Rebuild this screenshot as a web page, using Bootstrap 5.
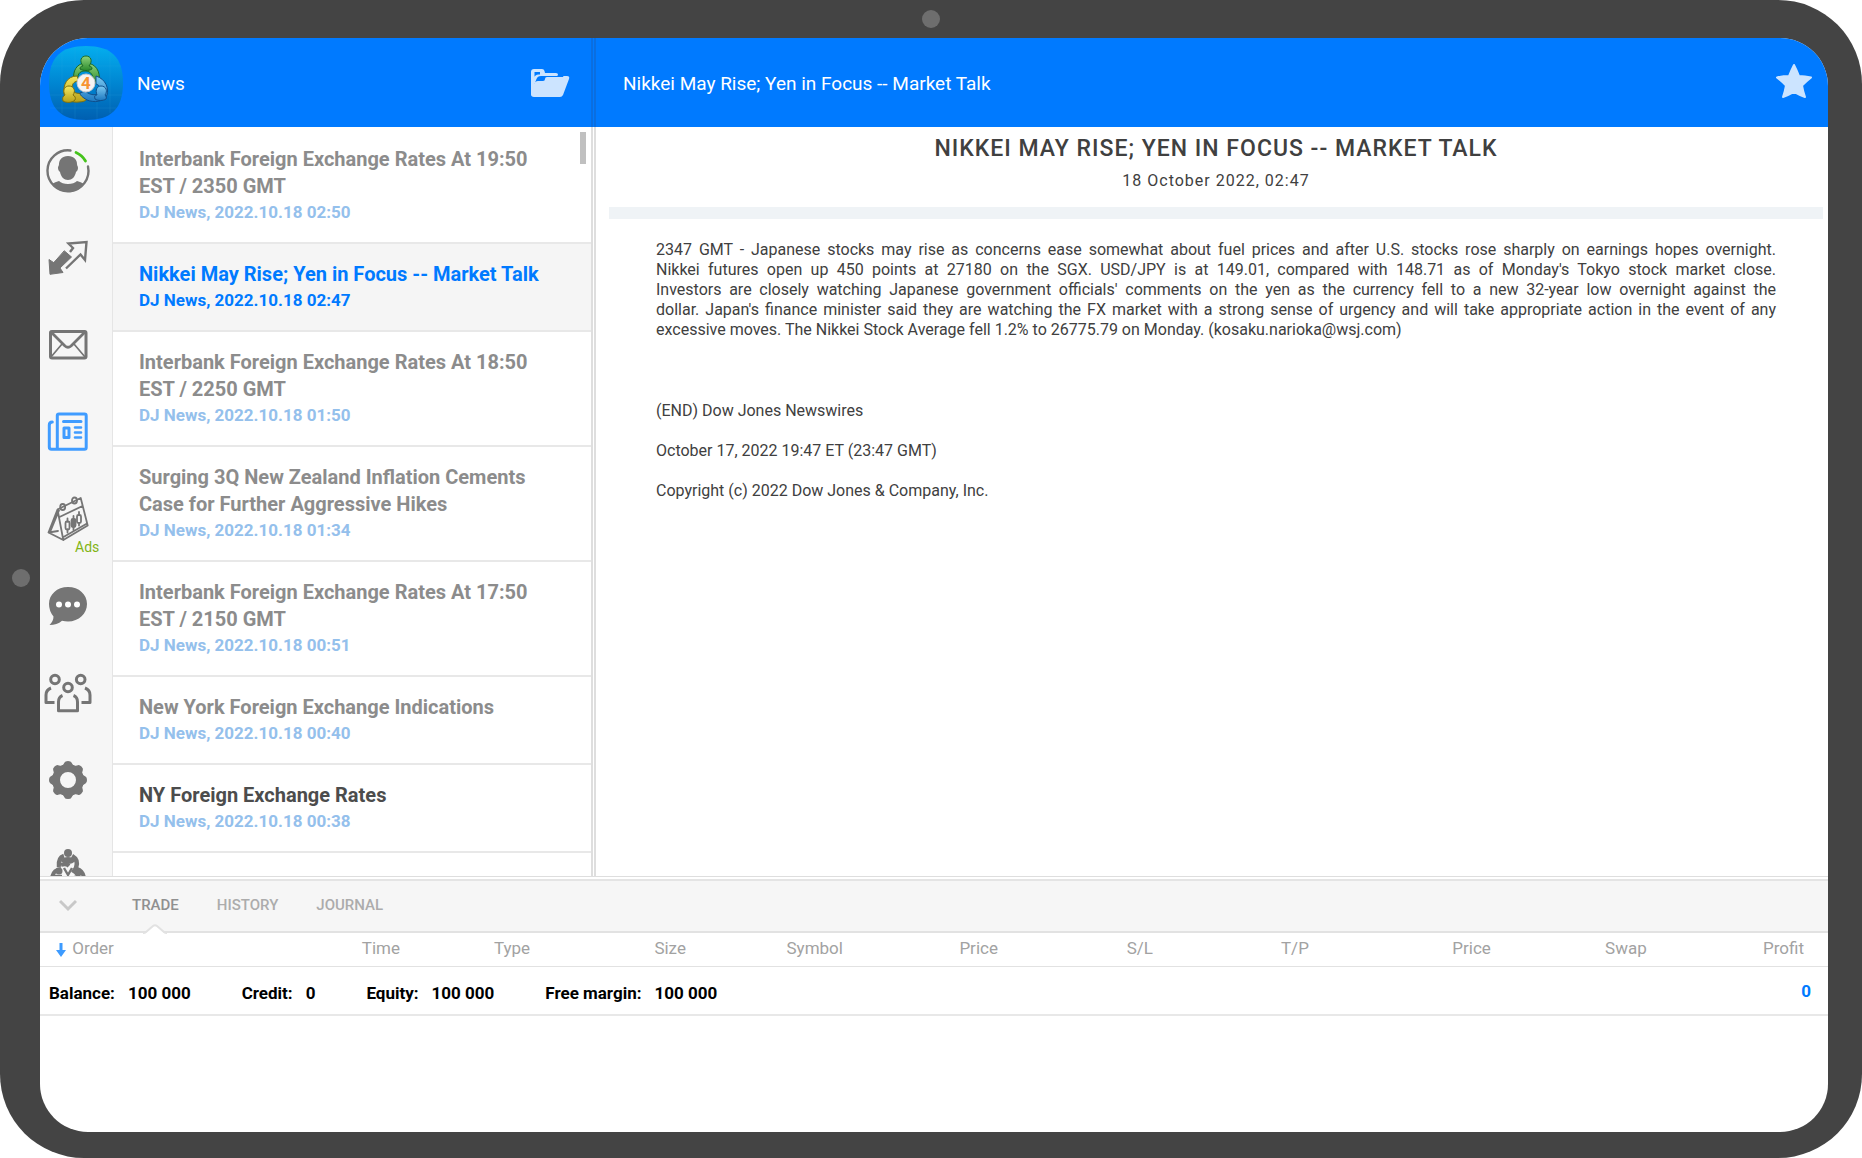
<!DOCTYPE html>
<html lang="en">
<head>
<meta charset="utf-8">
<meta name="viewport" content="width=device-width, initial-scale=1">
<title>News</title>
<link href="https://cdn.jsdelivr.net/npm/bootstrap@5.3.0/dist/css/bootstrap.min.css" rel="stylesheet">
<style>
  :root { --ink: #757575; --line: #e5e5e5; --blue: #007aff; --panel: #f6f6f6; }
  body { font-family: Roboto, "Liberation Sans", sans-serif; background: #fff; color: #404040; }
  .tablet { height: 100vh; padding: 38px 34px 26px 40px; background: #444; border-radius: 84px; }
  .lens { width: 18px; height: 18px; border-radius: 50%; background: #6e6e6e; }
  .lens-top { left: 50%; top: 10px; margin-left: -9px; }
  .lens-side { left: 12px; top: 50%; margin-top: -10px; }
  .app-screen { background: #fff; border-radius: 48px; }
  .topbar { background: var(--blue); color: #fff; height: 89px; font-size: 19px; line-height: 28px; }
  .topbar h1 { font-size: inherit; font-weight: 400; line-height: inherit; margin: 0; padding-top: 2px; }
  .topbar-left { width: 556px; padding: 0 21px 0 8px; border-right: 5px double #0a6ee0; }
  .topbar-right { padding: 0 15px 0 27px; }
  .brand { width: 76px; height: 76px; margin-right: 13px; }
  .plain-btn { border: 0; background: none; padding: 0; color: #cce4ff; line-height: 0; }
  .side-rail { width: 73px; background: var(--panel); border-right: 1px solid var(--line); }
  .rail-btn { display: block; position: relative; height: 87px; padding: 0 0 0 4px; border: 0; background: none; color: var(--ink); text-align: left; flex: none; }
  .rail-btn svg { width: 48px; height: 48px; fill: none; stroke: currentColor; stroke-width: 2.4; stroke-linejoin: round; stroke-linecap: round; }
  .rail-btn .solid { fill: currentColor; }
  .rail-btn.current { color: #409cff; }
  .ads-tag { position: absolute; left: 35px; bottom: 7px; font-size: 14px; line-height: 16px; color: #82b414; }
  .news-col { width: 483px; padding-top: 2px; border-right: 5px double #dedede; }
  .news-item { display: block; padding: 17px 34px 18px 26px; border-bottom: 2px solid #e8e8e8; text-decoration: none; color: #8c8c8c; }
  .news-item h2 { font-size: 20px; line-height: 27px; font-weight: 700; margin: 0; }
  .news-item p { font-size: 17px; line-height: 24px; font-weight: 700; margin: 0; color: #94c0ec; }
  .news-item.chosen { background: #f5f5f5; color: var(--blue); }
  .news-item.chosen p { color: var(--blue); }
  .news-item.unread { color: #4c4c4c; }
  .thumb { top: 5px; right: 5px; width: 6px; height: 32px; background: #c0c0c0; }
  .story { padding: 7px 5px 0 13px; }
  .story h2 { font-size: 23px; line-height: 30px; font-weight: 500; letter-spacing: 1px; margin: 0; text-transform: uppercase; }
  .story time { font-size: 16px; line-height: 20px; letter-spacing: 1px; margin: 7px 0 16px; }
  .story hr { height: 12px; border: 0; background: #eff3f6; opacity: 1; margin: 0 0 21px; }
  .story-text { padding: 0 47px; font-size: 16px; line-height: 20px; }
  .story-text p { margin: 0 0 20px; }
  .story-text .opening { margin-bottom: 61px; }
  .wire-line { display: block; text-align: justify; text-align-last: justify; }
  .terminal { height: 256px; border-top: 1px solid #dedede; }
  .tabstrip { height: 54px; margin-top: 2px; background: var(--panel); border-top: 2px solid #e4e4e4; border-bottom: 2px solid #e2e2e2; padding-left: 19px; }
  .tabstrip .chevron { color: #c8c8c8; margin-right: 55px; }
  .tabstrip .tab { position: relative; border: 0; background: none; padding: 0 0 2px; margin-right: 38px; height: 51px; font-size: 15px; font-weight: 500; color: #acacac; }
  .tabstrip .tab.on { color: #909090; }
  .tab .notch { position: absolute; left: 50%; bottom: -3px; margin-left: -12px; }
  .orders { width: 100%; table-layout: fixed; margin: 0; }
  .orders th { height: 33px; padding: 0 24px 2px 0; font-size: 17px; font-weight: 400; line-height: 24px; color: #a2a2a2; text-align: right; border-bottom: 1px solid #e2e2e2; }
  .orders th:first-child { text-align: left; padding-left: 16px; }
  .orders th svg { margin-right: 2px; }
  .orders td { height: 49px; padding: 6px 0 0; border-bottom: 2px solid #e8e8e8; font-size: 17px; line-height: 24px; font-weight: 700; color: #000; white-space: nowrap; }
  .totals { gap: 51px; padding-left: 9px; }
  .totals dl { display: flex; gap: 13px; margin: 0; }
  .totals dt, .totals dd { margin: 0; font-weight: 700; }
  .orders td.gain { color: var(--blue); text-align: right; padding: 1px 17px 0 0; }
</style>
</head>
<body>
<div class="tablet position-relative">
  <span class="lens lens-top position-absolute"></span>
  <span class="lens lens-side position-absolute"></span>
  <div class="app-screen h-100 d-flex flex-column overflow-hidden">

    <header class="topbar d-flex flex-shrink-0">
      <div class="topbar-left d-flex align-items-center flex-shrink-0">
        <svg class="brand" viewBox="0 0 76 76" aria-hidden="true">
          <defs>
            <linearGradient id="sky" x1="0" y1="0" x2="0" y2="1"><stop offset="0" stop-color="#04aeee"/><stop offset=".5" stop-color="#0086d2"/><stop offset="1" stop-color="#005fb0"/></linearGradient>
            <linearGradient id="leaf" x1="0" y1="0" x2="0" y2="1"><stop offset="0" stop-color="#8fd47c"/><stop offset="1" stop-color="#2b8a2c"/></linearGradient>
            <linearGradient id="gold" x1="0" y1="0" x2="0" y2="1"><stop offset="0" stop-color="#f4e860"/><stop offset="1" stop-color="#b8a018"/></linearGradient>
            <linearGradient id="sea" x1="0" y1="0" x2="0" y2="1"><stop offset="0" stop-color="#7ccaf2"/><stop offset="1" stop-color="#1d78c0"/></linearGradient>
          </defs>
          <path fill="url(#sky)" d="M38 1C63 1 75 12 75 38S63 75 38 75 1 64 1 38 13 1 38 1z"/>
          <path d="M14 8v60M27 2v72M49 2v72M62 8v60M3 21h70M2 63h66M2 50h72" stroke="#37b3ea" stroke-opacity=".15" fill="none"/>
          <g stroke-width="1">
            <path fill="url(#leaf)" stroke="#1c6b28" d="M26 36C24 26 29 18 38 18s15 8 13 19l-6 2c1-9-2-13-8-13s-8 4-7 10z"/>
            <path fill="url(#gold)" stroke="#7d7010" d="M29 31c-10 0-14 9-13 17 0 7 9 10 15 9 6 0 9-3 9-5l-4-5c-5 3-12 1-12-4s3-7 7-7z"/>
            <path fill="url(#sea)" stroke="#0f4f8c" d="M48 31c10 3 13 13 11 19-3 7-13 8-20 5-5-3-7-5-7-7l5-2c6 5 13 5 15 0 1-4-1-6-4-7z"/>
            <path fill="url(#leaf)" stroke="#1c6b28" d="M32 24c0-2 1-3 3-3-4-5-2-10 3-10s7 5 3 10c2 0 3 1 3 3-3 2-9 2-12 0z"/>
            <path fill="url(#gold)" stroke="#7d7010" d="M15 56c-1-3 0-5 2-6-3-5 0-9 4-9 5 0 7 5 4 9 2 1 3 3 2 5-3 3-9 3-12 1z"/>
            <path fill="url(#sea)" stroke="#0f4f8c" d="M47 54c-1-3 0-4 2-4-2-5 0-9 4-9 5 0 7 5 4 9 1 1 2 3 1 4-3 2-8 2-11 0z"/>
          </g>
          <circle cx="38" cy="38" r="9" fill="#f6f3f2" stroke="#c9c9cf"/>
          <text x="38" y="44" text-anchor="middle" font-family="Roboto, sans-serif" font-size="17" font-weight="700" fill="#f79432">4</text>
        </svg>
        <h1 class="flex-grow-1">News</h1>
        <button class="plain-btn" type="button" aria-label="Folders">
          <svg width="40" height="30" viewBox="0 0 40 30" fill="currentColor"><path d="M4 1h8q2 0 2.500 2l.5 2H26q2 0 2 1.500T26.500 8H11Q7.500 8 6.500 11L4 17V10Q5 6.500 8.500 6.500H10V4H4.500v18L2 28Q1 27 1 25V4q0-3 3-3z"/><path d="M15 11q0-2 2-2H33q0-1 1-1h3q3 0 2 3l-6 16q-1 2-3 2H4q-3 0-3-3V9l3 7q1-3 4-3h5q2 0 2-2z"/></svg>
        </button>
      </div>
      <div class="topbar-right d-flex align-items-center justify-content-between flex-grow-1">
        <h1>Nikkei May Rise; Yen in Focus -- Market Talk</h1>
        <button class="plain-btn pb-1" type="button" aria-label="Add to favourites">
          <svg width="38" height="36" viewBox="0 0 38 36" fill="currentColor" stroke="currentColor" stroke-width="2" stroke-linejoin="round"><path d="M19 2q3 6 5 11 6 0 12 1.500-5 4-9 8 1 6 3 11.500-6-2-11-5-5 3-11 5 2-5.500 3-11.500-4-4-9-8Q8 13 14 13q2-5 5-11z"/></svg>
        </button>
      </div>
    </header>

    <main class="d-flex flex-grow-1 overflow-hidden" style="min-height:0">
      <nav class="side-rail d-flex flex-column flex-shrink-0 overflow-hidden" aria-label="Sections">
        <button class="rail-btn" type="button" aria-label="Accounts"><svg viewBox="0 0 48 48"><path d="M26.500 3.500A20.500 20.500 0 1 0 44 19.500"/><path d="M32 5.500A20.500 20.500 0 0 1 41.500 14" stroke="#45c31c" stroke-width="2.800"/><path class="solid" stroke="none" d="M24 9c6 0 9 4 9 8 0 2 1 2 1 4s-1 3-2 4c-1 5-4 8-8 8s-7-3-8-8c-1-1-2-2-2-4s1-2 1-4c0-4 3-8 9-8zM8 37q3-2 7-3 3 3 9 3t9-3q4 1 7 3-6 8-16 8T8 37z"/></svg></button>
        <button class="rail-btn" type="button" aria-label="Trade"><svg viewBox="0 0 48 48"><path class="solid" stroke-width="1" d="M20.500 17 27.500 23 16 34l3 4.500-13 1.800L5 25.500l4.500 3z"/><path stroke-linejoin="miter" stroke-linecap="butt" d="m26 18 3-4-4.500-4.500 18-1.500-1.500 18-4.500-5.500L22 34.500"/></svg></button>
        <button class="rail-btn" type="button" aria-label="Mail"><svg viewBox="0 0 48 48"><rect x="6.500" y="10.500" width="35.500" height="26.500" rx="1.500" stroke-width="3"/><path d="m7 11 14 14q3 2.500 6 0l14-14" stroke-width="2.800"/><path d="m7 36 11-13M41 36 30 23" stroke-width="1.700"/></svg></button>
        <button class="rail-btn current" type="button" aria-label="News"><svg viewBox="0 0 48 48"><g stroke-width="3"><path d="M15 6h25.500q1.700 0 1.700 1.700v31.900q0 1.700-1.700 1.700H7.500Q5.300 41.300 5.300 39V17q0-3 3-3M13.300 41V7.500q0-1.500 1.700-1.500M19.500 13.500h17.500"/><path d="M20 20h5v9.500h-5z"/><path d="M31 19.500h6M31 24.500h6M31 29.500h6" stroke-width="2.600"/></g></svg></button>
        <button class="rail-btn" type="button" aria-label="Calendar"><svg viewBox="0 0 48 48"><g stroke-width="1.800"><path d="M13.500 14.500 36.700 3l7 27.500-24.400 14.500zM13.500 14.500 4.500 37.500l14.800 7.500M15 15.500 6.500 36M4.500 37.500l9.500-1.500M15.500 22 38.500 11M19.500 42 43 28.500"/><ellipse cx="18.700" cy="12" rx="2.500" ry="3"/><ellipse cx="30.500" cy="5.500" rx="2.500" ry="3"/><rect x="21.500" y="26.500" width="4" height="8" rx="1.500"/><rect class="solid" x="27.500" y="24" width="4" height="8" rx="1.500"/><rect x="33" y="20" width="4" height="8" rx="1.500"/><path d="M23.500 23.500v3M23.500 34.500v3M29.500 21v14M35 17v3M35 28v2.500"/></g></svg><span class="ads-tag">Ads</span></button>
        <button class="rail-btn" type="button" aria-label="Chat"><svg viewBox="0 0 48 48"><path class="solid" stroke="none" d="M24 5c11 0 19 7.500 19 17s-8 17.500-19 17.500q-3 0-6-.8-5 4.300-12.500 4.300 4-4 4-8.500Q5 29 5 22C5 12.500 13 5 24 5z"/><g fill="#fff" stroke="none"><circle cx="15" cy="22.500" r="3"/><circle cx="24" cy="22.500" r="3"/><circle cx="33" cy="22.500" r="3"/></g></svg></button>
        <button class="rail-btn" type="button" aria-label="Community"><svg viewBox="0 0 48 48" style="overflow:visible"><g stroke-width="3" stroke-linecap="butt"><circle cx="11" cy="10.500" r="4.300"/><circle cx="36.700" cy="10.500" r="4.300"/><circle cx="24" cy="18.500" r="4.300"/><path d="M18.500 26.500Q14.500 28 14.500 33v8.700h19V33q0-5-4-6.500M7 19Q2 21 2 26v7.500h8.500M41 19q5 2 5 7v7.500h-8.500"/></g></svg></button>
        <button class="rail-btn" type="button" aria-label="Settings"><svg viewBox="0 0 48 48"><circle cx="24" cy="24" r="12" stroke-width="8"/><g class="solid" stroke="none"><path id="tooth" d="M17 11q2.500-2 3.500-4.500Q21 5 24 5t3.500 1.500Q28.500 9 31 11z"/><use href="#tooth" transform="rotate(45 24 24)"/><use href="#tooth" transform="rotate(90 24 24)"/><use href="#tooth" transform="rotate(135 24 24)"/><use href="#tooth" transform="rotate(180 24 24)"/><use href="#tooth" transform="rotate(225 24 24)"/><use href="#tooth" transform="rotate(270 24 24)"/><use href="#tooth" transform="rotate(315 24 24)"/></g></svg></button>
        <button class="rail-btn" type="button" aria-label="About"><svg viewBox="0 0 48 48"><g stroke-linecap="butt"><circle class="solid" stroke="none" cx="24" cy="10" r="4"/><path class="solid" stroke="none" d="M17 18q2-4 7-4t7 4q-2 3-7 3t-7-3z"/><path stroke-width="4.500" d="M15 24q-1-9 5-11M28 13q7 4 4 12l-3 5"/><path stroke-width="4" d="M17 22q5-2 8 1M8 35q1-8 9-9M40 35q-1-7-7-9"/><circle class="solid" stroke="none" cx="15" cy="28" r="3.500"/><circle class="solid" stroke="none" cx="34" cy="30" r="3.500"/><path d="m20 25 4 7 4-7M9 33h9M30 34h9"/></g></svg></button>
      </nav>

      <section class="news-col position-relative flex-shrink-0 overflow-hidden" aria-label="Headlines">
        <a class="news-item" href="#"><h2>Interbank Foreign Exchange Rates At 19:50 EST / 2350 GMT</h2><p>DJ News, 2022.10.18 02:50</p></a>
        <a class="news-item chosen" href="#"><h2>Nikkei May Rise; Yen in Focus -- Market Talk</h2><p>DJ News, 2022.10.18 02:47</p></a>
        <a class="news-item" href="#"><h2>Interbank Foreign Exchange Rates At 18:50 EST / 2250 GMT</h2><p>DJ News, 2022.10.18 01:50</p></a>
        <a class="news-item" href="#"><h2>Surging 3Q New Zealand Inflation Cements Case for Further Aggressive Hikes</h2><p>DJ News, 2022.10.18 01:34</p></a>
        <a class="news-item" href="#"><h2>Interbank Foreign Exchange Rates At 17:50 EST / 2150 GMT</h2><p>DJ News, 2022.10.18 00:51</p></a>
        <a class="news-item" href="#"><h2>New York Foreign Exchange Indications</h2><p>DJ News, 2022.10.18 00:40</p></a>
        <a class="news-item unread" href="#"><h2>NY Foreign Exchange Rates</h2><p>DJ News, 2022.10.18 00:38</p></a>
        <span class="thumb position-absolute"></span>
      </section>

      <article class="story flex-grow-1">
        <h2 class="text-center">Nikkei May Rise; Yen in Focus -- Market Talk</h2>
        <time class="d-block text-center" datetime="2022-10-18T02:47">18 October 2022, 02:47</time>
        <hr>
        <div class="story-text">
          <p class="opening">
            <span class="wire-line">2347 GMT - Japanese stocks may rise as concerns ease somewhat about fuel prices and after U.S. stocks rose sharply on earnings hopes overnight.</span>
            <span class="wire-line">Nikkei futures open up 450 points at 27180 on the SGX. USD/JPY is at 149.01, compared with 148.71 as of Monday's Tokyo stock market close.</span>
            <span class="wire-line">Investors are closely watching Japanese government officials' comments on the yen as the currency fell to a new 32-year low overnight against the</span>
            <span class="wire-line">dollar. Japan's finance minister said they are watching the FX market with a strong sense of urgency and will take appropriate action in the event of any</span>
            excessive moves. The Nikkei Stock Average fell 1.2% to 26775.79 on Monday. (kosaku.narioka@wsj.com)
          </p>
          <p>(END) Dow Jones Newswires</p>
          <p>October 17, 2022 19:47 ET (23:47 GMT)</p>
          <p>Copyright (c) 2022 Dow Jones &amp; Company, Inc.</p>
        </div>
      </article>
    </main>

    <section class="terminal flex-shrink-0" aria-label="Terminal">
      <div class="tabstrip d-flex align-items-center">
        <button class="plain-btn chevron" type="button" aria-label="Collapse"><svg width="18" height="14" viewBox="0 0 18 14" fill="none" stroke="currentColor" stroke-width="3"><path d="m1 2 8 8 8-8"/></svg></button>
        <button class="tab on" type="button">TRADE<svg class="notch" width="24" height="11" viewBox="0 0 24 11"><path d="M0 10q2 0 3-1l7-7q2-1.500 4 0l7 7q1 1 3 1v1H0z" fill="#fff"/><path d="M0 9q2 0 3-1l7-6q2-1.500 4 0l7 6q1 1 3 1" fill="none" stroke="#e2e2e2" stroke-width="2"/></svg></button>
        <button class="tab" type="button">HISTORY</button>
        <button class="tab" type="button">JOURNAL</button>
      </div>
      <table class="orders">
        <colgroup><col style="width:11.19%"><col style="width:10.29%"><col style="width:7.27%"><col style="width:8.72%"><col style="width:8.78%"><col style="width:8.67%"><col style="width:8.67%"><col style="width:8.72%"><col style="width:10.18%"><col style="width:8.72%"><col style="width:8.79%"></colgroup>
        <thead><tr>
          <th scope="col"><svg width="10" height="14" viewBox="0 0 10 14" fill="#3d9bff"><path d="M3.500 0h3v7H10l-5 7-5-7h3.500z"/></svg> Order</th><th scope="col">Time</th><th scope="col">Type</th><th scope="col">Size</th><th scope="col">Symbol</th><th scope="col">Price</th><th scope="col">S/L</th><th scope="col">T/P</th><th scope="col">Price</th><th scope="col">Swap</th><th scope="col">Profit</th>
        </tr></thead>
        <tbody><tr>
          <td colspan="10"><div class="totals d-flex"><dl><dt>Balance:</dt><dd>100 000</dd></dl><dl><dt>Credit:</dt><dd>0</dd></dl><dl><dt>Equity:</dt><dd>100 000</dd></dl><dl><dt>Free margin:</dt><dd>100 000</dd></dl></div></td>
          <td class="gain">0</td>
        </tr></tbody>
      </table>
    </section>
  </div>
</div>
<script src="https://cdn.jsdelivr.net/npm/bootstrap@5.3.0/dist/js/bootstrap.bundle.min.js"></script>
</body>
</html>
